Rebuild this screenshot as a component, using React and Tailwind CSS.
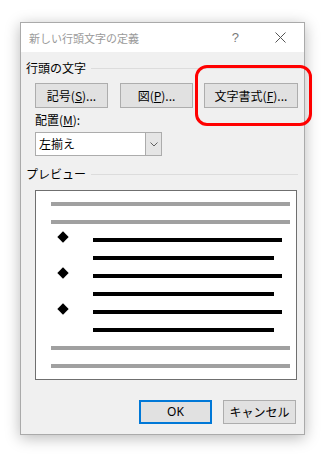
import React from "react";

const jp = { fontFamily: '"Noto Sans CJK JP", "Noto Sans", sans-serif' };

function Btn({ children, w, blue }) {
  return (
    <div
      className={`flex h-[25px] items-center justify-center bg-[#e1e1e1] text-[12px] leading-[16px] text-black ${w} ${
        blue ? "border-2 border-[#0078d7]" : "border border-[#adadad]"
      }`}
    >
      {children}
    </div>
  );
}

function Bar({ gray, short }) {
  return (
    <div
      className={`h-[4px] ${gray ? "w-[239px] bg-[#a0a0a0]" : short ? "w-[181px] bg-black" : "w-[189px] bg-black"}`}
    />
  );
}

function BulletRow({ bullet, short }) {
  return (
    <div className="flex h-[4px] items-center">
      <div className="flex w-[42px] items-center">
        {bullet && <div className="ml-[8px] h-[8px] w-[8px] -translate-y-[3px] rotate-45 bg-black" />}
      </div>
      <Bar short={short} />
    </div>
  );
}

export default function App() {
  return (
    <div className="relative h-[457px] w-[327px] bg-white pl-[20px] pt-[22px]" style={jp}>
      <div className="w-[285px] border border-[#aaaaaa] bg-[#f0f0f0] shadow-[0_3px_14px_rgba(0,0,0,0.28)]">
        {/* title bar */}
        <div className="flex h-[29px] items-center bg-white pl-[8px]">
          <span className="text-[11px] leading-[14px] text-[#9a9a9a]">新しい行頭文字の定義</span>
          <span className="ml-auto mr-[36px] text-[13px] leading-[14px] text-[#7a7a7a]" style={{ fontFamily: '"Liberation Sans", sans-serif' }}>
            ?
          </span>
          <svg width="11" height="11" viewBox="0 0 11 11" className="mr-[18px]">
            <path d="M0.5 0.5 L10.5 10.5 M10.5 0.5 L0.5 10.5" stroke="#555" strokeWidth="1" />
          </svg>
        </div>

        {/* body */}
        <div className="flex flex-col pb-[10px]">
          <div className="mt-[8px] flex items-center pl-[5px] pr-[4px]">
            <span className="text-[12px] leading-[16px] text-black">行頭の文字</span>
            <div className="ml-[5px] h-px flex-1 bg-[#dcdcdc]" />
          </div>

          <div className="mt-[7px] flex gap-[12px] pl-[14px]">
            <Btn w="w-[73px]">
              記号(<span className="underline">S</span>)...
            </Btn>
            <Btn w="w-[73px]">
              図(<span className="underline">P</span>)...
            </Btn>
            <div className="-ml-px">
              <Btn w="w-[94px]">
                文字書式(<span className="underline">F</span>)...
              </Btn>
            </div>
          </div>

          <div className="mt-[4px] pl-[14px] text-[12px] leading-[16px] text-black">
            配置(<span className="underline">M</span>):
          </div>

          <div className="ml-[14px] mt-[4px] flex h-[24px] w-[127px] border border-[#acacac] bg-white">
            <div className="flex flex-1 items-center pl-[3px] text-[12px] leading-[16px] text-black">左揃え</div>
            <div className="flex w-[16px] items-center justify-center border-l border-[#acacac] bg-[#e5e5e5]">
              <svg width="8" height="5" viewBox="0 0 8 5">
                <path d="M0.5 0.5 L4 4 L7.5 0.5" stroke="#606060" strokeWidth="1" fill="none" />
              </svg>
            </div>
          </div>

          <div className="mt-[10px] flex items-center pl-[5px] pr-[6px]">
            <span className="text-[12px] leading-[16px] text-black">プレビュー</span>
            <div className="ml-[5px] h-px flex-1 bg-[#dcdcdc]" />
          </div>

          <div className="ml-[14px] mt-[8px] flex w-[262px] flex-col gap-[14px] border border-[#6f6f6f] bg-white py-[11px] pl-[15px]">
            <Bar gray />
            <Bar gray />
            <BulletRow bullet />
            <BulletRow short />
            <BulletRow bullet />
            <BulletRow short />
            <BulletRow bullet />
            <BulletRow short />
            <Bar gray />
            <Bar gray />
          </div>

          <div className="mt-[20px] flex justify-end gap-[11px] pr-[8px]">
            <div className="flex h-[24px] w-[73px] items-center justify-center border-2 border-[#0078d7] bg-[#e1e1e1] text-[12px] leading-[16px] text-black" style={{ fontFamily: '"Noto Sans", sans-serif' }}>
              OK
            </div>
            <div className="flex h-[24px] w-[73px] items-center justify-center border border-[#adadad] bg-[#e1e1e1] text-[12px] leading-[16px] text-black">
              キャンセル
            </div>
          </div>
        </div>
      </div>

      {/* red annotation */}
      <div className="absolute left-[195px] top-[65px] h-[61px] w-[117px] rounded-[12px] border-[3px] border-[#ff0000]" />
    </div>
  );
}
